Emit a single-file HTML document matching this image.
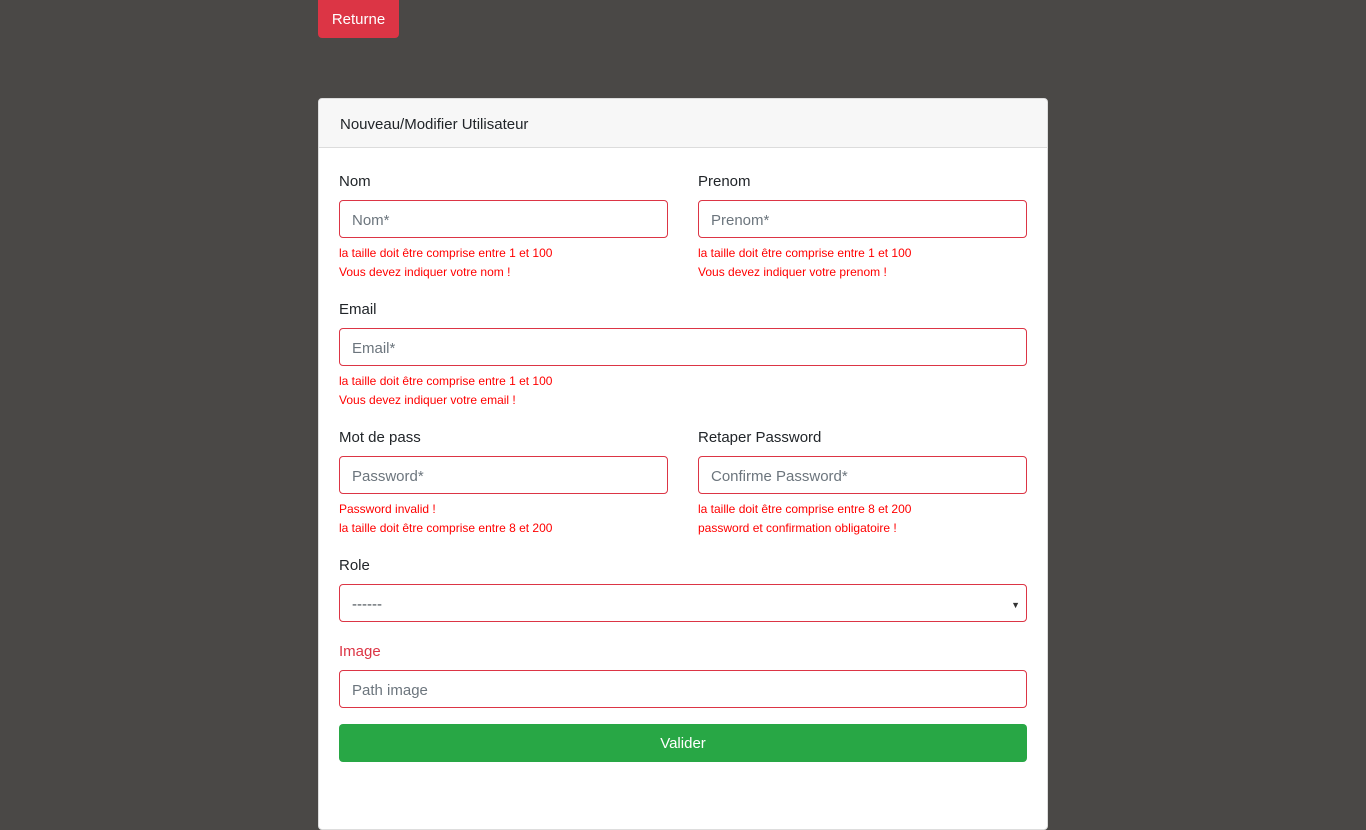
<!DOCTYPE html>
<html><head><meta charset="utf-8"><style>
body{margin:0;width:1366px;height:815px;background:#4a4846;font-family:"Liberation Sans",sans-serif;position:relative;overflow:hidden}
.a{position:absolute}
.btn{left:318px;top:0;width:81px;height:38px;background:#dc3545;color:#fff;border-radius:0 0 4px 4px;font-size:15px;line-height:40px;text-align:center}
.card{left:318px;top:98px;width:728px;height:730px;background:#fff;border:1px solid #ddd;border-radius:4px}
.hd{left:0;top:0;width:728px;height:48px;background:#f7f7f7;border-bottom:1px solid #dcdcdc;border-radius:4px 4px 0 0}
.hd span{position:absolute;left:21px;top:17px;font-size:15px;color:#212529}
.lb{font-size:15px;color:#212529;margin-top:1px}
.in{height:36px;border:1px solid #dc3545;border-radius:4px;box-sizing:content-box;font-size:15px;color:#6c757d;line-height:40px;padding-left:12px}
.er{font-size:12px;color:#f00;line-height:19px;margin-top:1px}
.ok{background:#28a745;color:#fff;font-size:15px;text-align:center;line-height:40px;border-radius:4px;height:38px}
</style></head><body>
<div class="a btn">Returne</div>
<div class="a card">
<div class="a hd"><span>Nouveau/Modifier Utilisateur</span></div>
<div class="a lb" style="left:20px;top:73px">Nom</div>
<div class="a in" style="left:20px;top:101px;width:315px">Nom*</div>
<div class="a er" style="left:20px;top:144px">la taille doit être comprise entre 1 et 100<br>Vous devez indiquer votre nom !</div>
<div class="a lb" style="left:379px;top:73px">Prenom</div>
<div class="a in" style="left:379px;top:101px;width:315px">Prenom*</div>
<div class="a er" style="left:379px;top:144px">la taille doit être comprise entre 1 et 100<br>Vous devez indiquer votre prenom !</div>
<div class="a lb" style="left:20px;top:201px">Email</div>
<div class="a in" style="left:20px;top:229px;width:674px">Email*</div>
<div class="a er" style="left:20px;top:272px">la taille doit être comprise entre 1 et 100<br>Vous devez indiquer votre email !</div>
<div class="a lb" style="left:20px;top:329px">Mot de pass</div>
<div class="a in" style="left:20px;top:357px;width:315px">Password*</div>
<div class="a er" style="left:20px;top:400px">Password invalid !<br>la taille doit être comprise entre 8 et 200</div>
<div class="a lb" style="left:379px;top:329px">Retaper Password</div>
<div class="a in" style="left:379px;top:357px;width:315px">Confirme Password*</div>
<div class="a er" style="left:379px;top:400px">la taille doit être comprise entre 8 et 200<br>password et confirmation obligatoire !</div>
<div class="a lb" style="left:20px;top:457px">Role</div>
<div class="a in" style="left:20px;top:485px;width:674px;color:#495057">------<span style="position:absolute;right:6px;top:0;font-size:9px;color:#333">▼</span></div>
<div class="a lb" style="left:20px;top:543px;color:#dc3545">Image</div>
<div class="a in" style="left:20px;top:571px;width:674px">Path image</div>
<div class="a ok" style="left:20px;top:625px;width:688px">Valider</div>
</div>
</body></html>
